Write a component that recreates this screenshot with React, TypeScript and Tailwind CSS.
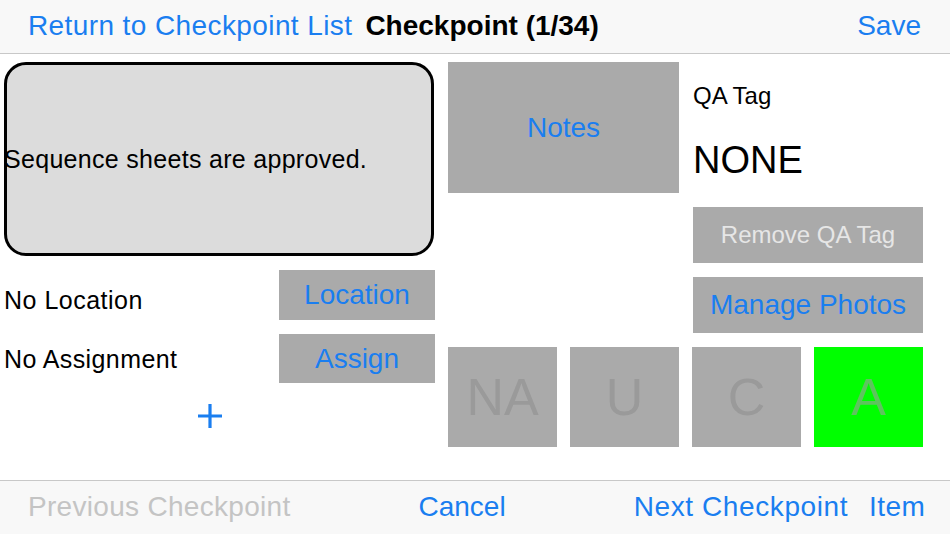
const blue = 'text-[#1a7ef0]';

function GrayButton({ label, className }: { label: string; className: string }) {
  return (
    <div className={`bg-[#aaaaaa] flex items-center justify-center text-[28px] leading-none ${blue} ${className}`}>
      {label}
    </div>
  );
}

function StatusButton({ label, active }: { label: string; active?: boolean }) {
  return (
    <div
      className={`w-[109px] h-[100px] flex items-center justify-center text-[52px] leading-none ${
        active ? 'bg-[#00ff00] text-[#5ec45e]' : 'bg-[#aaaaaa] text-[#9a9a9a]'
      }`}
    >
      {label}
    </div>
  );
}

export default function App() {
  return (
    <div className="w-[950px] h-[534px] flex flex-col bg-white font-['Liberation_Sans',Arial,sans-serif] text-black overflow-hidden">
      {/* top navigation */}
      <div className="h-[54px] shrink-0 flex items-center bg-[#f8f8f8] border-b border-[#c8c8c8] pl-[28px] pr-[29px] pb-[2px] text-[28px] leading-none">
        <span className={`${blue} tracking-[0.4px]`}>Return to Checkpoint List</span>
        <span className="ml-[13px] font-bold">Checkpoint (1/34)</span>
        <span className={`ml-auto ${blue}`}>Save</span>
      </div>

      {/* content */}
      <div className="flex-1 flex">
        <div className="ml-[4px] w-[431px] flex flex-col pt-[8px]">
          <div className="w-[430px] h-[194px] border-[3px] border-black rounded-[22px] bg-[#dcdcdc] flex items-center">
            <span className="-ml-[3px] text-[25px] leading-none tracking-[0.3px]">Sequence sheets are approved.</span>
          </div>

          <div className="mt-[14px] h-[50px] flex items-center justify-between">
            <span className="pt-[10px] text-[25px] leading-none tracking-[0.5px]">No Location</span>
            <GrayButton label="Location" className="w-[156px] h-[50px]" />
          </div>
          <div className="mt-[14px] h-[49px] flex items-center justify-between">
            <span className="pt-[2px] text-[25px] leading-none tracking-[0.4px]">No Assignment</span>
            <GrayButton label="Assign" className="w-[156px] h-[49px]" />
          </div>

          <svg className="ml-[193px] mt-[20px]" width="26" height="26" viewBox="0 0 26 26">
            <path d="M13 1v24M1 13h24" stroke="#1a7ef0" strokeWidth="3.2" />
          </svg>
        </div>

        <div className="ml-[13px] w-[475px] flex flex-col pt-[8px]">
          <div className="flex gap-[14px]">
            <GrayButton label="Notes" className="w-[231px] h-[131px]" />
            <div className="w-[230px] flex flex-col">
              <span className="mt-[20px] text-[24px] leading-[28px]">QA Tag</span>
              <span className="mt-[30px] text-[38px] leading-[40px]">NONE</span>
              <div className="mt-[27px] h-[56px] bg-[#aaaaaa] flex items-center justify-center text-[24px] leading-none text-[#e6e6e6]">
                Remove QA Tag
              </div>
              <GrayButton label="Manage Photos" className="mt-[14px] h-[56px]" />
            </div>
          </div>

          <div className="mt-[14px] flex gap-[13px]">
            <StatusButton label="NA" />
            <StatusButton label="U" />
            <StatusButton label="C" />
            <StatusButton label="A" active />
          </div>
        </div>
      </div>

      {/* bottom toolbar */}
      <div className="h-[54px] shrink-0 flex items-center bg-[#f8f8f8] border-t border-[#c8c8c8] pb-[2px] text-[28px] leading-none">
        <span className="ml-[28px] text-[#c4c4c4] tracking-[0.3px]">Previous Checkpoint</span>
        <span className={`ml-[128px] ${blue}`}>Cancel</span>
        <span className={`ml-[128px] ${blue} tracking-[0.6px]`}>Next Checkpoint</span>
        <span className={`ml-[21px] ${blue} tracking-[0.4px]`}>Item</span>
      </div>
    </div>
  );
}
